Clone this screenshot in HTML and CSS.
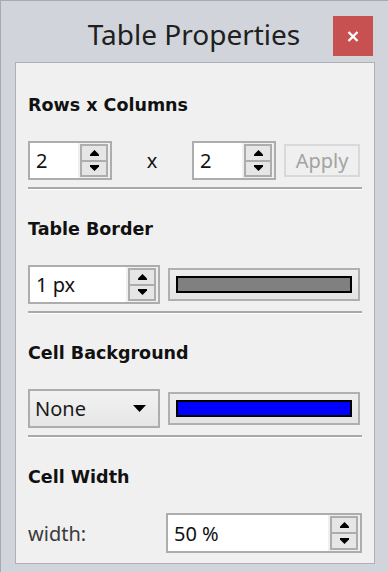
FILE: index.html
```html
<!DOCTYPE html>
<html>
<head>
<meta charset="utf-8">
<link rel="stylesheet" href="styles.css">
</head>
<body>
<div class="window">
  <header class="titlebar">
    <div class="title">Table Properties</div>
    <button class="close" aria-label="Close">
      <svg width="12" height="11" viewBox="0 0 12 11"><path d="M1.5 1 L10.5 10 M10.5 1 L1.5 10" stroke="#fff" stroke-width="2.4" fill="none"/></svg>
    </button>
  </header>
  <main class="panel">
    <section class="section first">
      <h2 class="heading">Rows x Columns</h2>
      <div class="row rc">
        <div class="spinbox w84">
          <span class="value">2</span>
          <div class="spin">
            <div class="btns">
              <span class="sbtn"><svg width="9" height="6" viewBox="0 0 9 6"><polygon points="4.5,0 9,4.5 9,6 0,6 0,4.5"/></svg></span>
              <span class="sbtn"><svg width="9" height="6" viewBox="0 0 9 6"><polygon points="0,0 9,0 9,1.5 4.5,6 0,1.5"/></svg></span>
            </div>
          </div>
        </div>
        <span class="times">x</span>
        <div class="spinbox w84">
          <span class="value">2</span>
          <div class="spin">
            <div class="btns">
              <span class="sbtn"><svg width="9" height="6" viewBox="0 0 9 6"><polygon points="4.5,0 9,4.5 9,6 0,6 0,4.5"/></svg></span>
              <span class="sbtn"><svg width="9" height="6" viewBox="0 0 9 6"><polygon points="0,0 9,0 9,1.5 4.5,6 0,1.5"/></svg></span>
            </div>
          </div>
        </div>
        <button class="apply" disabled>Apply</button>
      </div>
      <div class="sep"></div>
    </section>

    <section class="section">
      <h2 class="heading">Table Border</h2>
      <div class="row">
        <div class="spinbox w132">
          <span class="value">1 px</span>
          <div class="spin">
            <div class="btns">
              <span class="sbtn"><svg width="9" height="6" viewBox="0 0 9 6"><polygon points="4.5,0 9,4.5 9,6 0,6 0,4.5"/></svg></span>
              <span class="sbtn"><svg width="9" height="6" viewBox="0 0 9 6"><polygon points="0,0 9,0 9,1.5 4.5,6 0,1.5"/></svg></span>
            </div>
          </div>
        </div>
        <div class="colorbtn"><span class="swatch gray"></span></div>
      </div>
      <div class="sep"></div>
    </section>

    <section class="section">
      <h2 class="heading">Cell Background</h2>
      <div class="row">
        <div class="select">
          <span class="value">None</span>
          <svg class="caret" width="13" height="7" viewBox="0 0 13 7"><polygon points="0,0 13,0 6.5,7"/></svg>
        </div>
        <div class="colorbtn"><span class="swatch blue"></span></div>
      </div>
      <div class="sep"></div>
    </section>

    <section class="section last">
      <h2 class="heading">Cell Width</h2>
      <div class="row width-row">
        <span class="label">width:</span>
        <div class="spinbox w196">
          <span class="value">50 %</span>
          <div class="spin">
            <div class="btns">
              <span class="sbtn"><svg width="9" height="6" viewBox="0 0 9 6"><polygon points="4.5,0 9,4.5 9,6 0,6 0,4.5"/></svg></span>
              <span class="sbtn"><svg width="9" height="6" viewBox="0 0 9 6"><polygon points="0,0 9,0 9,1.5 4.5,6 0,1.5"/></svg></span>
            </div>
          </div>
        </div>
      </div>
    </section>
  </main>
</div>
</body>
</html>
```

FILE: styles.css
```css
* { box-sizing: border-box; }
html, body { margin: 0; padding: 0; }
body {
  width: 388px;
  height: 572px;
  overflow: hidden;
  background: #d1d5db;
  font-family: "Noto Sans", "Open Sans", sans-serif;
}
.window {
  width: 388px;
  height: 572px;
  background: #d1d5db;
  border-top: 1px solid #a7abb1;
  border-left: 1px solid #a7abb1;
}
.titlebar {
  display: grid;
  grid-template-columns: 1fr auto 1fr;
  align-items: start;
  height: 61px;
  padding: 0 15px 0 14px;
}
.title {
  grid-column: 2;
  font-size: 28px;
  line-height: 38px;
  margin-top: 14px;
  color: #202020;
  white-space: nowrap;
}
.close {
  grid-column: 3;
  justify-self: end;
  margin-top: 15px;
  width: 40px;
  height: 40px;
  border: 0;
  padding: 0;
  background: #c75050;
  display: flex;
  align-items: center;
  justify-content: center;
}
.panel {
  margin-left: 14px;
  width: 360px;
  height: 502px;
  background: #f0f0f0;
  border: 1px solid #adb0b5;
  padding: 0 12px;
}
.section { padding-top: 27px; }
.section.first { padding-top: 30px; }
.heading {
  margin: 0 0 24px 0;
  font-family: "DejaVu Sans", sans-serif;
  font-weight: bold;
  font-size: 17.5px;
  line-height: 24px;
  color: #111;
}
.row {
  display: flex;
  align-items: center;
  gap: 8px;
}
.sep {
  margin-top: 7px;
  height: 3px;
  border-top: 2px solid #a9a9a9;
  border-bottom: 1px solid #ffffff;
}
.spinbox {
  height: 39px;
  border: 2px solid #adadad;
  background: #fff;
  display: flex;
  align-items: stretch;
}
.w84 { width: 84px; }
.w132 { width: 132px; }
.w196 { width: 196px; height: 40px; }
.value {
  flex: 1;
  display: flex;
  align-items: center;
  padding-left: 6px;
  font-size: 20px;
  color: #111;
  white-space: nowrap;
}
.spin {
  width: 32px;
  background: #f0f0f0;
  padding: 1px 2px 1px 2px;
}
.btns {
  height: 100%;
  display: grid;
  grid-template-rows: 1fr 1fr;
  gap: 2px;
  background: #adadad;
  padding: 2px;
}
.sbtn {
  background: #e6e6e6;
  display: flex;
  align-items: center;
  justify-content: center;
}
.sbtn svg { fill: #000; display: block; }
.times {
  width: 64px;
  text-align: center;
  font-size: 20px;
  color: #111;
  line-height: 24px;
}
.rc { gap: 0; }
.rc .times { width: 80px; }
.apply {
  margin-left: 8px;
  width: 76px;
  height: 33px;
  border: 2px solid #d9d9d9;
  background: #efefef;
  color: #a3a3a3;
  font-family: "Noto Sans", "Open Sans", sans-serif;
  font-size: 20px;
  padding: 0;
  line-height: 27px;
}
.colorbtn {
  width: 192px;
  height: 33px;
  border: 2px solid #b0b0b0;
  background: linear-gradient(#eeeeee, #e4e4e4);
  padding: 6px;
  display: flex;
}
.swatch {
  flex: 1;
  border: 2px solid #000;
}
.swatch.gray { background: #808080; }
.swatch.blue { background: #0000ff; }
.select {
  width: 132px;
  height: 39px;
  border: 2px solid #adadad;
  background: linear-gradient(#f2f2f2, #e6e6e6);
  display: flex;
  align-items: center;
  padding-right: 12px;
}
.select .value { padding-left: 5px; color: #1a1a1a; }
.caret { display: block; fill: #000; }
.width-row { justify-content: space-between; }
.label {
  font-size: 20px;
  color: #3a3a3a;
}
```
